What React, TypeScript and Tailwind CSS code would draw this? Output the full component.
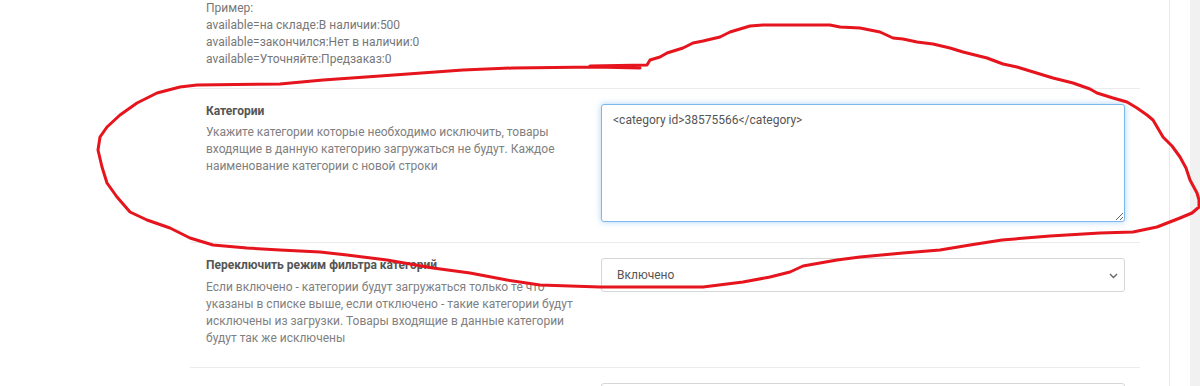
import React from "react";

const loop = [
  [590, 66], [647, 65], [650, 60], [660, 57], [667, 53], [683, 48], [693, 43], [703, 41],
  [720, 37], [730, 32], [750, 26], [763, 25], [830, 25], [840, 27], [860, 28], [880, 32],
  [893, 38], [903, 39], [917, 42], [933, 44], [950, 48], [963, 52], [987, 58], [1003, 64],
  [1017, 67], [1030, 71], [1053, 78], [1073, 83], [1090, 89], [1097, 93], [1113, 98],
  [1127, 102], [1137, 108], [1147, 115], [1153, 120], [1163, 137], [1172, 146], [1180, 157],
  [1186, 168], [1190, 180], [1197, 193], [1199, 200], [1199, 207], [1192, 213], [1180, 218],
  [1157, 227], [1133, 232], [1100, 233], [1050, 236], [1002, 240], [970, 245], [940, 250],
  [903, 253], [860, 257], [837, 260], [803, 266], [790, 272], [770, 277], [743, 282],
  [703, 287], [600, 287], [540, 285], [507, 280], [470, 273], [433, 268], [387, 260],
  [347, 255], [320, 252], [280, 250], [247, 248], [213, 245], [190, 238], [170, 228],
  [147, 220], [130, 212], [117, 197], [107, 183], [102, 167], [98, 150], [100, 137],
  [107, 127], [120, 115], [137, 103], [157, 93], [180, 87], [197, 85], [280, 84],
  [323, 80], [380, 76], [463, 70], [513, 68], [595, 67], [640, 68],
];

const Row = ({ children, first }: { children: React.ReactNode; first?: boolean }) => (
  <div
    className={
      "grid grid-cols-[376px_524px] gap-x-[19px] pl-4 pr-[15px] pb-5 " +
      (first ? "" : "border-t border-[#ebebeb] pt-[14px]")
    }
  >
    {children}
  </div>
);

export default function App() {
  return (
    <div className="relative flex h-[386px] overflow-hidden bg-white font-['Roboto','Liberation_Sans',sans-serif] text-xs leading-[17px]">
      <div className="w-[1170px] shrink-0 border-r border-[#e9e9e9]">
        <div className="ml-[190px] w-[950px]">
          <Row first>
            <div className="text-[#777]">
              <div>Пример:</div>
              <div>available=на складе:В наличии:500</div>
              <div>available=закончился:Нет в наличии:0</div>
              <div>available=Уточняйте:Предзаказ:0</div>
            </div>
            <div />
          </Row>

          <Row>
            <div>
              <div className="font-bold text-[#555]">Категории</div>
              <div className="mt-1 text-[#808080]">
                Укажите категории которые необходимо исключить, товары входящие в данную категорию загружаться не будут. Каждое наименование категории с новой строки
              </div>
            </div>
            <div className="pt-px">
              <textarea
                readOnly
                value="<category id>38575566</category>"
                className="block h-[118px] w-full rounded-[3px] border border-[#7cb8ec] bg-white px-[11px] pt-[7px] text-xs leading-[17px] text-[#555] shadow-[0_0_6px_rgba(102,175,233,0.55)] outline-none"
              />
            </div>
          </Row>

          <Row>
            <div>
              <div className="font-bold text-[#555]">Переключить режим фильтра категорий</div>
              <div className="mt-[5px] text-[#808080]">
                Если включено - категории будут загружаться только те что указаны в списке выше, если отключено - такие категории будут исключены из загрузки. Товары входящие в данные категории будут так же исключены
              </div>
            </div>
            <div className="pt-px">
              <div className="relative">
                <select
                  defaultValue="1"
                  className="block h-[34px] w-full appearance-none rounded-[3px] border border-[#d6d6d6] bg-white pl-[15px] text-xs text-[#555] outline-none"
                >
                  <option value="1">Включено</option>
                  <option value="0">Выключено</option>
                </select>
                <svg
                  className="pointer-events-none absolute right-[7px] top-[15px]"
                  width="9"
                  height="6"
                  viewBox="0 0 9 6"
                >
                  <path d="M1 1l3.5 3.5L8 1" fill="none" stroke="#666" strokeWidth="1.4" />
                </svg>
              </div>
            </div>
          </Row>

          <Row>
            <div />
            <div className="pt-px">
              <div className="h-[34px] w-full rounded-[3px] border border-[#d6d6d6]" />
            </div>
          </Row>
        </div>
      </div>
      <div className="w-5 shrink-0" />
      <div className="w-[10px] shrink-0 bg-[#f1f1f1]" />

      <svg className="pointer-events-none absolute inset-0" width="1200" height="386">
        <polyline
          points={loop.map((p) => p.join(",")).join(" ")}
          fill="none"
          stroke="#e5141d"
          strokeWidth="3"
          strokeLinejoin="round"
          strokeLinecap="round"
        />
      </svg>
    </div>
  );
}
